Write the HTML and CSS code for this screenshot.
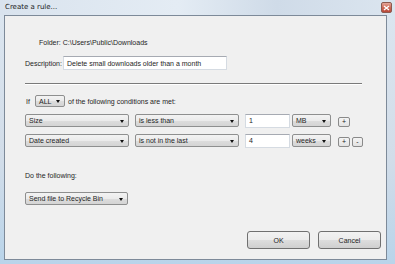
FILE: index.html
```html
<!DOCTYPE html>
<html lang="en">
<head>
    <meta charset="UTF-8">
    <title>Create a rule...</title>
    <link rel="stylesheet" href="styles.css">
</head>
<body>
    <div class="window">
        <!-- title bar -->
        <div class="titlebar">
            <span class="title">Create a rule...</span>
            <span class="close-btn">
                <svg width="7" height="6" viewBox="0 0 7 6"><path d="M1 1 L6 5 M6 1 L1 5" stroke="#fff" stroke-width="1.4"/></svg>
            </span>
        </div>

        <div class="frame">
            <div class="client">
                <div class="folder">Folder: C:\Users\Public\Downloads</div>

                <div class="desc-row">
                    <span class="label">Description:</span>
                    <div class="textbox desc-box">Delete small downloads older than a month</div>
                </div>

                <div class="divider"></div>

                <div class="if-row">
                    <span>If</span>
                    <div class="combo combo-all">ALL<i class="arrow"></i></div>
                    <span>of the following conditions are met:</span>
                </div>

                <div class="cond-row">
                    <div class="combo combo-field">Size<i class="arrow"></i></div>
                    <div class="combo combo-op">is less than<i class="arrow"></i></div>
                    <div class="textbox value-box">1</div>
                    <div class="combo combo-unit">MB<i class="arrow"></i></div>
                    <div class="mini-btn">+</div>
                </div>

                <div class="cond-row">
                    <div class="combo combo-field">Date created<i class="arrow"></i></div>
                    <div class="combo combo-op">is not in the last<i class="arrow"></i></div>
                    <div class="textbox value-box">4</div>
                    <div class="combo combo-unit">weeks<i class="arrow"></i></div>
                    <div class="mini-btn">+</div>
                    <div class="mini-btn minus">-</div>
                </div>

                <div class="do-label">Do the following:</div>
                <div class="combo combo-action">Send file to Recycle Bin<i class="arrow"></i></div>

                <div class="actions">
                    <div class="btn">OK</div>
                    <div class="btn">Cancel</div>
                </div>
            </div>
        </div>
    </div>
</body>
</html>
```

FILE: styles.css
```css
:root {
    --face: #f0f0f0;
    --frame: #d3dfeb;
    --text: #1e1e1e;
}

body {
    margin: 0;
    padding: 0;
    font-family: 'Liberation Sans', Arial, sans-serif;
    font-size: 7px;
    color: var(--text);
}

.window {
    width: 395px;
    height: 264px;
    display: flex;
    flex-direction: column;
    background: linear-gradient(to bottom, #dce6f0 0%, #d2dde9 60%, #b9d4ea 100%);
}

/* title bar */
.titlebar {
    height: 15px;
    display: flex;
    align-items: center;
    padding-left: 5px;
    background: linear-gradient(to right, #d9e3ee 0%, #e4ecf4 45%, #cfdbe8 70%, #dbe5ef 100%);
}

.title {
    flex: 1;
    font-family: 'DejaVu Sans', sans-serif;
    font-size: 7px;
    color: #222;
    line-height: 15px;
}

.close-btn {
    width: 11px;
    height: 11px;
    margin-right: 3px;
    border: 1px solid #8c5a50;
    border-radius: 2px;
    background: linear-gradient(to bottom, #e3a79a 0%, #cf6a58 50%, #b8483a 100%);
    display: flex;
    align-items: center;
    justify-content: center;
    box-sizing: border-box;
}

.frame {
    flex: 1;
    display: flex;
    padding: 0 8px 4px 4px;
}

.client {
    flex: 1;
    background: var(--face);
    border: 1px solid #7d8a99;
    padding-left: 20px;
}

/* rows */
.folder {
    margin-top: 22px;
    padding-left: 14px;
    line-height: 10px;
}

.desc-row {
    display: flex;
    align-items: center;
    margin-top: 8px;
    height: 14px;
}

.label {
    white-space: nowrap;
    width: 38px;
}

.textbox {
    background: #fff;
    border: 1px solid #d5dbe2;
    border-top-color: #a6aab2;
    box-sizing: border-box;
    padding-left: 3px;
    display: flex;
    align-items: center;
}

.desc-box {
    width: 164px;
    height: 14px;
}

.divider {
    margin-top: 13px;
    width: 337px;
    height: 1px;
    background: #7a7a7a;
    border-bottom: 1px solid #fff;
}

.if-row {
    display: flex;
    align-items: center;
    margin-top: 10px;
    height: 12px;
    gap: 3px;
}

.if-row span:first-child {
    width: 6px;
    padding-left: 1px;
}

.combo {
    position: relative;
    box-sizing: border-box;
    border: 1px solid #8e8f8f;
    border-radius: 2px;
    background: linear-gradient(to bottom, #f3f3f3 0%, #ebebeb 50%, #dddddd 51%, #d4d4d4 100%);
    padding-left: 3px;
    display: flex;
    align-items: center;
}

.arrow {
    position: absolute;
    right: 4px;
    top: 50%;
    margin-top: -1px;
    border-left: 2.5px solid transparent;
    border-right: 2.5px solid transparent;
    border-top: 3px solid #111;
}

.combo-all {
    width: 30px;
    height: 12px;
}

.cond-row {
    display: flex;
    align-items: center;
    margin-top: 7px;
    height: 13px;
}

.combo-field, .combo-op {
    width: 104px;
    height: 13px;
    margin-right: 6px;
}

.value-box {
    width: 45px;
    height: 14px;
    margin-right: 2px;
}

.combo-unit {
    width: 39px;
    height: 13px;
    margin-right: 7px;
}

.mini-btn {
    width: 12px;
    height: 10px;
    box-sizing: border-box;
    border: 1px solid #8a8a8a;
    border-radius: 2px;
    background: linear-gradient(to bottom, #f4f4f4 0%, #e2e2e2 100%);
    font-size: 7px;
    line-height: 8px;
    text-align: center;
    margin-top: 2px;
}

.mini-btn.minus {
    margin-left: 2px;
    width: 11px;
}

.do-label {
    margin-top: 24px;
    line-height: 10px;
}

.combo-action {
    margin-top: 11px;
    width: 103px;
    height: 13px;
}

/* buttons */
.actions {
    display: flex;
    justify-content: flex-end;
    gap: 8px;
    margin-top: 26px;
    padding-right: 5px;
}

.btn {
    width: 63px;
    height: 18px;
    box-sizing: border-box;
    border: 1px solid #707070;
    border-radius: 3px;
    background: linear-gradient(to bottom, #f2f2f2 0%, #ebebeb 50%, #dddddd 51%, #cfcfcf 100%);
    display: flex;
    align-items: center;
    justify-content: center;
}
```
